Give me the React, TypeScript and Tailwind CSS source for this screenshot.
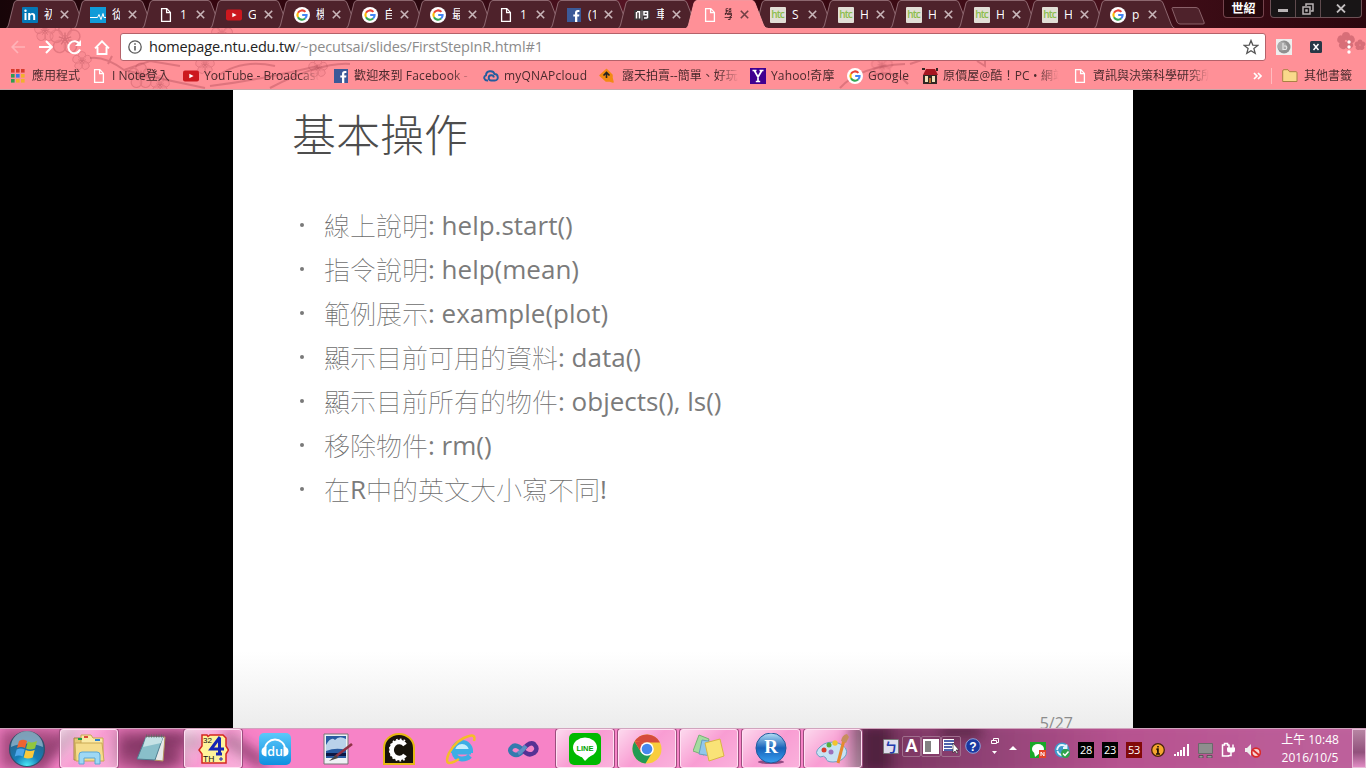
import React from "react";

const ui = "font-['Open_Sans','Noto_Sans_CJK_TC',sans-serif]";

function GoogleG({ className = "" }: { className?: string }) {
  return (
    <svg width="16" height="16" viewBox="0 0 16 16" className={`shrink-0 ${className}`}>
      <circle cx="8" cy="8" r="8" fill="#fff" />
      <g fill="none" strokeWidth="2.1">
        <path d="M11.4 4.9A4.6 4.6 0 0 0 4 5.8" stroke="#ea4335" />
        <path d="M4 5.8a4.6 4.6 0 0 0 0 4.5" stroke="#fbbc05" />
        <path d="M4 10.3a4.6 4.6 0 0 0 7.1 1.2" stroke="#34a853" />
        <path d="M11.1 11.5A4.4 4.4 0 0 0 12.6 8H8.2" stroke="#4285f4" />
      </g>
    </svg>
  );
}

function PageIcon({ className = "" }: { className?: string }) {
  return (
    <svg width="16" height="16" viewBox="0 0 16 16" fill="none" stroke="#fff" strokeWidth="1.3" className={`shrink-0 ${className}`}>
      <path d="M3.6 1.6h5.2l3.6 3.8v9H3.6zM8.6 1.8v3.8h3.6" />
    </svg>
  );
}

function YouTube({ className = "" }: { className?: string }) {
  return (
    <svg width="16" height="16" viewBox="0 0 16 16" className={`shrink-0 ${className}`}>
      <rect y="2.5" width="16" height="11" rx="2" fill="#cc181e" />
      <path d="M6.3 5.7v4.6L10.6 8z" fill="#fff" />
    </svg>
  );
}

function Facebook({ className = "" }: { className?: string }) {
  return (
    <svg width="16" height="16" viewBox="0 0 16 16" className={`shrink-0 ${className}`}>
      <rect x="1" y="1" width="14" height="14" fill="#3b5998" />
      <path d="M9 15V9.6H7.3V7.4H9V6c0-2 1-3 2.9-3h1.5v2.1h-1.1c-.8 0-1 .4-1 1.1v1.2h2.1l-.3 2.2h-1.8V15z" fill="#fff" />
    </svg>
  );
}

function Favicon({ kind }: { kind: string }) {
  switch (kind) {
    case "in":
      return (
        <svg width="16" height="16" viewBox="0 0 16 16" className="shrink-0">
          <rect width="16" height="16" rx="1" fill="#0477b5" />
          <path d="M2.5 6h2v7h-2zM6.2 6h2v1c1.3-1.8 5-1.6 5 1.8V13h-2V9.4c0-2.3-3-2.1-3 0V13h-2z" fill="#fff" />
          <circle cx="3.5" cy="3.8" r="1.2" fill="#fff" />
        </svg>
      );
    case "pulse":
      return (
        <svg width="16" height="16" viewBox="0 0 16 16" className="shrink-0">
          <rect width="16" height="16" fill="#0f9bd8" />
          <path d="M0 10.500h7.500l1.500-3 2 5 2-6 1 4h2" fill="none" stroke="#fff" strokeWidth="1" />
        </svg>
      );
    case "page":
      return <PageIcon />;
    case "yt":
      return <YouTube />;
    case "fb":
      return <Facebook />;
    case "book":
      return (
        <svg width="16" height="16" viewBox="0 0 16 16" className="shrink-0">
          <path d="M0 3h16v10H9l-1 1-1-1H0z" fill="#3a3536" />
          <path d="M2.500 11.500V5M3 4.800H5.500V11.500M13.500 11V4.800H10v3h3.500M13.500 11H10" fill="none" stroke="#fff" strokeWidth="1.500" />
          <path d="M8 3.500v10" stroke="#aaa" strokeWidth=".8" />
        </svg>
      );
    case "htc":
      return (
        <span className="flex h-4 w-4 shrink-0 items-center justify-center rounded-[1px] bg-[#e2dfd6] pr-px pb-[2px] font-['Open_Sans',sans-serif] text-[10px] leading-none font-semibold tracking-[-0.9px] text-[#8cbd4c]">
          htc
        </span>
      );
    default:
      return <GoogleG />;
  }
}

const tabs: [string, string][] = [
  ["in", "初"], ["pulse", "從"], ["page", "1"], ["yt", "G"], ["g", "機"], ["g", "自"], ["g", "最"], ["page", "1"],
  ["fb", "(1"], ["book", "車"], ["page", "學"], ["htc", "S"], ["htc", "H"], ["htc", "H"], ["htc", "H"], ["htc", "H"], ["g", "p"],
];

function Tab({ kind, label, active }: { kind: string; label: string; active: boolean }) {
  return (
    <div className={`relative h-[29px] w-[68px] shrink-0 ${active ? "z-10" : ""}`}>
      <svg width="82" height="29" viewBox="0 0 82 29" className="absolute top-0 left-0">
        <path
          d="M0 28.5Q1.500 28 2.500 25L8 3Q9 .5 11 .5H66Q68 .5 69 3L77.500 25Q79 28 81 28.5z"
          fill={active ? "#ff9097" : "#4e222b"}
          stroke={active ? "#ff9fa5" : "#957078"}
          strokeWidth=".9"
        />
        {active && <path d="M0 28.5h82" stroke="#ff9097" strokeWidth="1.5" />}
      </svg>
      <div className="relative flex h-[29px] items-center pl-4">
        <Favicon kind={kind} />
        <span className={`ml-[6px] w-[8px] overflow-hidden text-[12px] leading-4 whitespace-nowrap ${active ? "text-[#33191c]" : "text-white"}`}>{label}</span>
        <svg width="9" height="9" viewBox="0 0 9 9" className="ml-[8px] shrink-0" stroke={active ? "#713f45" : "#c9b6ba"} strokeWidth="1.6">
          <path d="M.8.8l7.4 7.4M8.2.8L.8 8.2" />
        </svg>
      </div>
    </div>
  );
}

function Blossom({ x, y, s = 1 }: { x: number; y: number; s?: number }) {
  return (
    <g transform={`translate(${x} ${y}) scale(${s})`}>
      {[0, 72, 144, 216, 288].map((a) => (
        <g key={a} transform={`rotate(${a})`}>
          <circle cx="0" cy="-7" r="4.800" fill="#e87f88" fillOpacity=".45" stroke="#c9606b" strokeWidth="1.100" />
          <path d="M0 0v-5" stroke="#b34f5a" strokeWidth="1" />
        </g>
      ))}
      <circle r="1.500" fill="#b34f5a" />
    </g>
  );
}

function ToolbarArt() {
  return (
    <svg width="1366" height="61" viewBox="0 0 1366 61" className="absolute inset-0">
      <g opacity=".5">
        <Blossom x={65} y={11} s={1.3} />
        <Blossom x={45} y={3} s={0.9} />
        <Blossom x={82} y={33} s={0.8} />
        <Blossom x={222} y={6} s={0.9} />
        <Blossom x={141} y={48} s={1.1} />
        <Blossom x={160} y={57} s={0.8} />
        <Blossom x={205} y={37} s={0.8} />
        <Blossom x={318} y={40} s={0.8} />
        <Blossom x={882} y={38} s={0.9} />
      </g>
      <g fill="#a94753" opacity=".45">
        {[0, 72, 144, 216, 288].map((a) => (
          <React.Fragment key={a}>
            <circle cx="1346" cy="8" r="4" transform={`rotate(${a} 1346 13)`} />
            <circle cx="1360" cy="14" r="2.500" transform={`rotate(${a} 1360 17)`} />
          </React.Fragment>
        ))}
      </g>
      <g fill="none" stroke="#a94753" strokeWidth="2" opacity=".38">
        <path d="M90 30Q105 28 124 42Q165 52 205 60M108 36l4-8M124 42L150 33L180 38M210 58Q260 52 318 38M270 60Q320 34 350 36M215 50q25-20 60-12M840 60Q860 38 905 36M870 48q24-8 38 8M910 36q20-7 28-7M985 32v6l-8-5" />
      </g>
    </svg>
  );
}

function Mark({ icon, text, box }: { icon: React.ReactNode; text: string; box: string }) {
  return (
    <div className="flex shrink-0 items-center">
      {icon}
      <span className={`overflow-hidden text-[12px] leading-4 whitespace-nowrap ${box}`}>{text}</span>
    </div>
  );
}

const fade = "[mask-image:linear-gradient(to_right,#000_82%,transparent)]";

function Bookmarks() {
  return (
    <div className="relative flex h-[27px] items-center text-[#4a2a2d]">
      <Mark
        icon={
          <svg width="14" height="14" viewBox="0 0 14 14" className="ml-[11px]">
            {["#d63a2c", "#d63a2c", "#d63a2c", "#2f9e4f", "#3c78e6", "#f1b02b", "#2f9e4f", "#f1b02b", "#f1b02b"].map((c, i) => (
              <rect key={i} x={(i % 3) * 5} y={Math.floor(i / 3) * 5} width="3.6" height="3.6" fill={c} />
            ))}
          </svg>
        }
        text="應用程式"
        box="ml-[7px] w-[59px]"
      />
      <Mark icon={<PageIcon />} text="I Note登入" box="ml-[5px] w-[61px]" />
      <Mark icon={<YouTube className="ml-[10px]" />} text="YouTube - Broadcast" box={`ml-[5px] w-[115px] ${fade}`} />
      <Mark icon={<Facebook className="ml-[14px]" />} text="歡迎來到 Facebook -" box={`ml-[5px] w-[119px] tracking-[0.15px] ${fade}`} />
      <Mark
        icon={
          <svg width="16" height="16" viewBox="0 0 16 16" className="ml-[10px]" fill="none" stroke="#245c9e" strokeWidth="1.9">
            <path d="M5 12.5C1 13 0 8.5 3 7.4 3 2.5 10.2 1.8 11.5 6c4 0 4.7 6.5.2 6.5H8.3a2.6 2.6 0 1 1 2.6-3" />
          </svg>
        }
        text="myQNAPcloud"
        box="ml-[5px] w-[91px] tracking-[0.2px]"
      />
      <Mark
        icon={
          <svg width="16" height="16" viewBox="0 0 16 16" className="ml-[4px]">
            <path d="M7.500 1.500l5.500 5.500v3l1 4-3-1H7l-6-5.500z" fill="#f28a13" stroke="#f28a13" strokeWidth="1.5" strokeLinejoin="round" />
            <path d="M4.500 7.500l3-3 3 3M7.500 5v5" stroke="#222" strokeWidth="1.6" fill="none" />
          </svg>
        }
        text="露天拍賣--簡單、好玩"
        box={`ml-[7px] w-[117px] ${fade}`}
      />
      <Mark
        icon={
          <svg width="16" height="16" viewBox="0 0 16 16" className="ml-[11px]">
            <rect width="16" height="16" fill="#400090" />
            <path d="M2.5 2.5h4M9.5 2.5h4M4.3 2.5L8 9l3.8-6.5M8 8.500v5M5.800 13.500h4.400" stroke="#fff" strokeWidth="1.7" fill="none" />
          </svg>
        }
        text="Yahoo!奇摩"
        box="ml-[5px] w-[68px] tracking-[0.15px]"
      />
      <Mark icon={<GoogleG className="ml-[8px]" />} text="Google" box="ml-[5px] w-[46px] tracking-[0.3px]" />
      <Mark
        icon={
          <svg width="16" height="16" viewBox="0 0 16 16" className="ml-[8px]">
            <path d="M0 0h3v2H0zM14 0h2v3h-2zM1 7h14v9H1z" fill="#322724" />
            <path d="M4 1h9l3 6H1z" fill="#a51620" />
            <path d="M3 8h3v6H3zM10 8h3v6h-3z" fill="#eee1b9" />
            <path d="M7 10h2v5H7z" fill="#bd6c2d" />
          </svg>
        }
        text="原價屋@酷！PC • 網站"
        box={`ml-[5px] w-[116px] tracking-[0.15px] ${fade}`}
      />
      <Mark icon={<PageIcon className="ml-[13px]" />} text="資訊與決策科學研究所" box={`ml-[5px] w-[116px] ${fade}`} />
      <svg width="9" height="8" viewBox="0 0 9 8" className="ml-[44px] shrink-0" fill="none" stroke="#fff" strokeWidth="1.7">
        <path d="M1 1l3 3-3 3M5 1l3 3-3 3" />
      </svg>
      <span className="ml-[9px] h-4 w-px bg-[#ffbcc0]" />
      <svg width="16" height="14" viewBox="0 0 16 14" className="ml-[10px] shrink-0">
        <path d="M.7 12.500V2Q.7.700 2 .700h4l1.500 2H14q1 0 1 1v8.800z" fill="#f9d98b" stroke="#a98044" />
      </svg>
      <span className="ml-[6px] text-[12px] whitespace-nowrap">其他書籤</span>
    </div>
  );
}

function Browser() {
  return (
    <header className={`h-[90px] ${ui}`}>
      <div className="flex h-[28px] bg-[linear-gradient(90deg,#170508,#36060f_15%,#29070e_30%,#5b1526_48%,#35070f_56%,#46101b_80%,#2b060d)] pl-[6px]">
        {tabs.map(([kind, label], i) => (
          <Tab key={i} kind={kind} label={label} active={i === 10} />
        ))}
        <svg width="35" height="18" viewBox="0 0 35 18" className="mt-[7px] ml-[9px] shrink-0">
          <path d="M1 1.500Q1 .5 2 .5H25q2 0 3 2L33 15q1 2-1 2H9q-2 0-3-2z" fill="#4e222b" stroke="#8a6169" />
        </svg>
        <div className="ml-[17px] flex h-[18px] w-[41px] shrink-0 items-center justify-center rounded-b-[4px] border border-t-0 border-[#74434c] bg-[#24070c] text-[12px] font-bold text-white">世紹</div>
        <div className="ml-[6px] flex h-[18px] w-[92px] shrink-0 rounded-b-[4px] border border-t-0 border-[#6d5156] bg-[#181516]">
          <div className="flex w-[25px] items-center justify-center border-r border-[#5f4b4e]"><span className="mt-[3px] h-[3px] w-[10px] bg-[#b9b4b5]" /></div>
          <div className="flex w-[25px] items-center justify-center border-r border-[#5f4b4e]">
            <svg width="12" height="12" viewBox="0 0 12 12" fill="none" stroke="#b9b4b5" strokeWidth="1.5"><path d="M4 3V1h7v7H9M1 4h7v7H1zM4 7h1v1H4z" /></svg>
          </div>
          <div className="flex flex-1 items-center justify-center">
            <svg width="10" height="9" viewBox="0 0 10 9" stroke="#c2bebf" strokeWidth="1.8"><path d="M1 .5l8 8M9 .5l-8 8" /></svg>
          </div>
        </div>
      </div>
      <div className="relative h-[62px] border-b border-[#c9a5a8] bg-[#ff9097]">
        <ToolbarArt />
        <div className="relative flex h-[34px] items-start pt-[5px]">
          <div className="flex h-[28px] items-center">
            <svg width="14" height="14" viewBox="0 0 14 14" className="ml-[11px]" fill="none" stroke="#ffb3b8" strokeWidth="1.7"><path d="M14 7H1.500M7 1L1.200 7 7 13" /></svg>
            <svg width="14" height="14" viewBox="0 0 14 14" className="ml-[14px]" fill="none" stroke="#fff" strokeWidth="2"><path d="M0 7h12.500M7 1l5.800 6L7 13" /></svg>
            <svg width="15" height="15" viewBox="0 0 15 15" className="ml-[14px]" fill="none" stroke="#fff" strokeWidth="2"><path d="M12.500 4A6 6 0 1 0 13 9.500" /><path d="M14 0v6H8z" fill="#fff" stroke="none" /></svg>
            <svg width="16" height="15" viewBox="0 0 16 15" className="ml-[12px]" fill="none" stroke="#fff" strokeWidth="1.900"><path d="M3.500 7v7h9V7M1 8.300l7-7 7 7" /></svg>
          </div>
          <div className="ml-[10px] flex h-[28px] w-[1146px] items-center rounded-[3px] border border-[#b5626a] bg-white pr-[6px] pl-[7px]">
            <svg width="14" height="14" viewBox="0 0 14 14" fill="none" stroke="#5a5a5a" strokeWidth="1.3"><circle cx="7" cy="7" r="6.200" /><path d="M7 6v4.500M7 3.300v1.500" strokeWidth="1.600" /></svg>
            <span className="ml-[7px] text-[14.5px] leading-5 tracking-[-0.14px] whitespace-nowrap text-[#8b8b8b]"><span className="text-[#222]">homepage.ntu.edu.tw</span>/~pecutsai/slides/FirstStepInR.html#1</span>
            <svg width="16" height="16" viewBox="0 0 16 16" className="ml-auto" fill="none" stroke="#555" strokeWidth="1.300"><path d="M8 1.500l1.800 4.600 5 .3-3.900 3.200 1.300 4.800L8 11.700l-4.200 2.700 1.300-4.800-3.900-3.200 5-.3z" /></svg>
          </div>
          <div className="flex h-[28px] items-center">
            <svg width="16" height="16" viewBox="0 0 16 16" className="ml-[10px]"><path d="M0 0h16v16H0z" fill="#eee" /><circle cx="8" cy="8" r="6.500" fill="#8f8f8f" /><circle cx="6" cy="7" r="4.500" fill="#aaa" /><path d="M7 4v6.500h3q1.500-2 0-3.500H8" stroke="#e5e5e5" fill="none" strokeWidth="1.200" /></svg>
            <svg width="12" height="12" viewBox="0 0 12 12" className="ml-[18px]"><rect width="12" height="12" rx="1.500" fill="#263746" /><path d="M3.500 3l5 6M8.500 3l-5 6" stroke="#fff" strokeWidth="1.500" /></svg>
            <svg width="4" height="14" viewBox="0 0 4 14" className="ml-[25px]" fill="#fff"><circle cx="2" cy="2" r="1.700" /><circle cx="2" cy="7" r="1.700" /><circle cx="2" cy="12" r="1.700" /></svg>
          </div>
        </div>
        <Bookmarks />
      </div>
    </header>
  );
}

const items: [string, string][] = [
  ["線上說明", ": help.start()"],
  ["指令說明", ": help(mean)"],
  ["範例展示", ": example(plot)"],
  ["顯示目前可用的資料", ": data()"],
  ["顯示目前所有的物件", ": objects(), ls()"],
  ["移除物件", ": rm()"],
];

function Bullet() {
  return <span className="mr-[20px] ml-[7px] h-[4px] w-[4px] rounded-full bg-[#797979]" />;
}

function Slide() {
  return (
    <main className="flex h-[638px] justify-center overflow-hidden bg-black">
      <section className={`flex h-[638px] w-[900px] flex-col bg-[linear-gradient(#fff_88%,#ececec)] ${ui}`}>
        <h1 className="mt-[15px] ml-[59px] h-[60px] text-[44px] leading-[60px] font-light text-[#4d4d4d]">基本操作</h1>
        <ul className="mt-[38px] ml-[60px] text-[26px] leading-[42px] text-[#7b7b7b]">
          {items.map(([zh, en]) => (
            <li key={zh} className="flex h-[44px] items-center whitespace-nowrap">
              <Bullet />
              <span className="pt-[2px] font-thin text-[#6c6c6c]">{zh}</span><span className="pb-[1px] whitespace-pre">{en}</span>
            </li>
          ))}
          <li className="flex h-[44px] items-center whitespace-nowrap">
            <Bullet />
            <span className="pt-[2px] font-thin text-[#6c6c6c]">在</span><span>R</span><span className="pt-[2px] font-thin text-[#6c6c6c]">中的英文大小寫不同</span><span>!</span>
          </li>
        </ul>
        <div className="mt-auto h-[16px] overflow-hidden pr-[60px] text-right text-[16px] leading-[22px] text-[#8c8c8c]">5/27</div>
      </section>
    </main>
  );
}

function Task({ children, on }: { children: React.ReactNode; on?: boolean }) {
  return (
    <div className={`flex h-[39px] w-[58px] shrink-0 items-center justify-center rounded-[3px] ${on ? "border border-[#ffe0f2] bg-[linear-gradient(135deg,#ffffffb0,#ffffff35_50%,#ffffff60)] shadow-[0_0_0_1px_#9b4d7d]" : ""}`}>
      {children}
    </div>
  );
}

function Orb() {
  return (
    <svg width="38" height="38" viewBox="0 0 38 38" className="ml-[8px] shrink-0">
      <defs>
        <radialGradient id="orb" cx=".5" cy="1" r=".9"><stop offset="0" stopColor="#4ef2fb" /><stop offset=".4" stopColor="#167eb8" /><stop offset="1" stopColor="#2c5e83" /></radialGradient>
      </defs>
      <circle cx="19" cy="19" r="17.500" fill="url(#orb)" stroke="#35506b" strokeWidth="1.200" />
      <path d="M3 17a16 16 0 0 1 32 0Q18 10 3 17z" fill="#cde1ee" opacity=".5" />
      <path d="M11 11q4-2.500 8 0l-2 7q-4-2-8 0z" fill="#ee6432" />
      <path d="M20 11.500q4 2 9-.5l-2 7.500q-5 2-9 0z" fill="#91c63e" />
      <path d="M8.700 19.500q4-2 8 0l-2 7q-4-2-8 0z" fill="#4da6e9" />
      <path d="M17.700 20q4 2 9 0l-2 7.500q-5 2-9 0z" fill="#fbc93b" />
    </svg>
  );
}

function Taskbar() {
  return (
    <footer className={`relative flex h-[40px] items-center overflow-hidden border-t border-[#d1a4be] bg-[#f783c7] ${ui}`}>
      <svg width="1366" height="40" viewBox="0 0 1366 40" className="absolute inset-0">
        <defs>
          <filter id="soft" x="-20%" y="-50%" width="140%" height="200%"><feGaussianBlur stdDeviation="7" /></filter>
          <linearGradient id="tray" x1="0" x2="1"><stop offset="0" stopColor="#713058" /><stop offset=".25" stopColor="#904275" /><stop offset=".5" stopColor="#b6528f" /><stop offset="1" stopColor="#be639d" /></linearGradient>
        </defs>
        <g filter="url(#soft)">
          <path d="M0 0h60l-20 40H0zM115 0h70v40h-70z" fill="#a4487e" />
          <path d="M35 42L75-2M120 20l45-10M140 40q25-45 60-25M225 8l40 28M155 40l20-16" stroke="#702956" strokeWidth="9" fill="none" />
          <path d="M850-10h540v60H850z" fill="url(#tray)" />
          <path d="M860-5h32v50h-32zM940-5h42v14h-42z" fill="#51223f" />
        </g>
      </svg>
      <div className="relative flex h-[39px] items-center">
        <Orb />
        <div className="ml-[14px] flex gap-[4px]">
          <Task on>
            <svg width="34" height="32" viewBox="0 0 34 32"><path d="M2 5h9l2 3h16v19H2z" fill="#e5c873" stroke="#a58644" /><path d="M9 2h10l2 3h10v20H9z" fill="#faeaa6" stroke="#c7a653" /><path d="M3 10h27l2 18H4z" fill="#f5dc8c" stroke="#caa954" /><path d="M6 6h4" stroke="#17a14b" strokeWidth="2" /><path d="M12 4h4" stroke="#db4b39" strokeWidth="2" /><path d="M23 7h5" stroke="#2e82d0" strokeWidth="2" /><path d="M7 31v-9q0-3 3-3h15q3 0 3 3v9h-5v-6H12v6z" fill="#9ed8f4" stroke="#5ba7d4" /></svg>
          </Task>
          <Task>
            <svg width="34" height="32" viewBox="0 0 34 32"><path d="M12 4h19l-2 24-9-1z" fill="#e8e8e8" stroke="#b4925c" /><path d="M12 4h17l-8 23-18-1z" fill="#89bfca" stroke="#507f90" /><path d="M12 4h17l-2 6-18 4z" fill="#c5e2e5" /><path d="M12 3h18" stroke="#666" strokeWidth="3" strokeDasharray="1 1.500" /></svg>
          </Task>
          <Task on>
            <svg width="32" height="32" viewBox="0 0 32 32">
              <path d="M5 2h5l1 1.500L13 2h13l3 3v8l2.500 4-2.500 4v9H5v-9l-3-4 3-4z" fill="#fff39b" stroke="#d42722" strokeWidth="1.500" />
              <text x="6" y="10" fontSize="8" fontFamily="Liberation Sans" fill="#111">32</text>
              <path d="M23 4l-9 12h13M22.500 5v16M19 21h6" stroke="#1726b4" strokeWidth="3" fill="none" />
              <text x="6" y="29" fontSize="8.500" fontFamily="Liberation Sans" fill="#111">TH</text>
              <path d="M22 26h4M24 24v4" stroke="#1726b4" />
            </svg>
          </Task>
          <Task>
            <svg width="32" height="32" viewBox="0 0 32 32"><defs><linearGradient id="du" x2="0" y2="1"><stop stopColor="#5cc9fa" /><stop offset="1" stopColor="#0f8fe0" /></linearGradient></defs><rect width="32" height="32" rx="5" fill="url(#du)" /><path d="M6 16a10 9.500 0 0 1 20 0" fill="none" stroke="#fff" strokeWidth="1.800" /><path d="M7.500 13.500v10q-5-.5-5-5t5-5zM24.500 13.500v10q5-.5 5-5t-5-5z" fill="#fff" /><text x="16" y="22.500" fontSize="12.500" textAnchor="middle" fontFamily="Open Sans" fontWeight="600" fill="#fff">du</text></svg>
          </Task>
          <Task>
            <svg width="32" height="32" viewBox="0 0 32 32"><path d="M3 1h24v30H3z" fill="#eef1f5" stroke="#777" /><path d="M5 3h20v22H5z" fill="#285ba1" /><path d="M5 12q5-9 9-5 4-5 11-1v11q-10-3-20 1z" fill="#b9d2ea" /><path d="M5 21.500h20" stroke="#0b1745" strokeWidth="3" /><path d="M31 11L14 24" stroke="#8e3144" strokeWidth="2.600" /><path d="M15 22l-7 6 9-3z" fill="#444" /></svg>
          </Task>
          <Task>
            <svg width="32" height="32" viewBox="0 0 32 32"><path d="M1 31V15a15 14 0 0 1 30 0v16z" fill="#17130a" stroke="#e5b813" strokeWidth="2" /><path d="M22 12A7.500 8 0 1 0 22 22" fill="none" stroke="#fff" strokeWidth="4.500" /><path d="M22 8A10 10.500 0 1 0 22 26" fill="none" stroke="#fff" strokeWidth="2" strokeDasharray="1.700 2" /></svg>
          </Task>
          <Task>
            <svg width="32" height="32" viewBox="0 0 32 32"><path d="M26 19H9q1 7 8 7 5 0 8-3" fill="none" stroke="#3caee5" strokeWidth="5" /><path d="M8 18a9 9 0 0 1 18 0z" fill="#c5effc" stroke="#3caee5" strokeWidth="4" /><path d="M29 8Q31 1 24 3 12 6 4 20 0 29 4 30q4 0 10-4" fill="none" stroke="#f4bd28" strokeWidth="2.500" /></svg>
          </Task>
          <Task>
            <svg width="32" height="20" viewBox="0 0 32 20" fill="none" strokeWidth="4.500"><path d="M17 12Q9 4 5 8t1 7q5 3 11-4" stroke="#347bae" /><path d="M15 12q7-10 12-7 5 5 0 9-6 4-12-4" stroke="#563294" /><path d="M11 14.500q4-2 8-7.500" stroke="#5c8fc4" strokeWidth="4" /></svg>
          </Task>
          <Task on>
            <svg width="32" height="32" viewBox="0 0 32 32"><rect width="32" height="32" rx="5" fill="#00b900" /><ellipse cx="16" cy="14.500" rx="12" ry="10" fill="#fff" /><path d="M12 23l4 5 7-7z" fill="#fff" /><text x="16" y="17.500" textAnchor="middle" fontSize="7.500" fontWeight="bold" fontFamily="Liberation Sans" fill="#00a600">LINE</text></svg>
          </Task>
          <Task on>
            <svg width="30" height="30" viewBox="0 0 30 30"><circle cx="15" cy="15" r="14.500" fill="#f8cd3d" /><path d="M2.500 7.500A14.500 14.500 0 0 1 28 8.500H15z" fill="#d64b3c" /><path d="M2.500 7.500A14.500 14.500 0 0 0 13.500 29.400l7-11.400L9 18z" fill="#229b54" /><path d="M2.500 7.500L9 18l6-9.500z" fill="#d64b3c" /><circle cx="15" cy="15" r="6.800" fill="#fff" /><circle cx="15" cy="15" r="5.300" fill="#4688ed" /></svg>
          </Task>
          <Task on>
            <svg width="32" height="30" viewBox="0 0 32 30"><path d="M6 1l10 4-5 16-11-4z" fill="#a5dba0" stroke="#78b275" /><path d="M9 6l12 2-3 14-12-2z" fill="#91c7eb" stroke="#689ebd" /><path d="M12 9l15-4 4 17-15 5z" fill="#f9e377" stroke="#d8b644" /></svg>
          </Task>
          <Task on>
            <svg width="32" height="32" viewBox="0 0 32 32"><defs><linearGradient id="rball" x2="0" y2="1"><stop stopColor="#b8e1f7" /><stop offset=".5" stopColor="#1762b9" /><stop offset="1" stopColor="#389ff0" /></linearGradient></defs><ellipse cx="16" cy="29" rx="13" ry="2" fill="#914c83" /><circle cx="16" cy="15" r="15" fill="url(#rball)" stroke="#215a9b" /><text x="16" y="20" fontSize="19" textAnchor="middle" fontFamily="Liberation Serif" fontWeight="bold" fill="#fff">R</text></svg>
          </Task>
          <Task on>
            <svg width="34" height="32" viewBox="0 0 34 32"><path d="M4 14Q11 7 22 10q11 4 8 12-4 7-13 7-7 0-7-4-2-3-6-1-7-4 0-10z" fill="#c7e2f3" stroke="#6c9fc4" /><circle cx="8" cy="17" r="2.500" fill="#d93d2c" /><circle cx="13" cy="12" r="2.500" fill="#58ad39" /><circle cx="19" cy="10" r="2.700" fill="#f2c42f" /><circle cx="15" cy="19" r="2.500" fill="#9a71bd" /><path d="M28 7l-6 23" stroke="#e58a2e" strokeWidth="3" /><path d="M25 8q1-6 6-7l2 3-3 6z" fill="#c88e5d" /></svg>
          </Task>
        </div>
      </div>
      <Tray />
    </footer>
  );
}

function Num({ n, className }: { n: string; className: string }) {
  return <span className={`mt-[2px] flex h-[16px] w-[16px] shrink-0 items-center justify-center text-[11px] leading-none tracking-[-0.4px] text-white ${className}`}>{n}</span>;
}

function Tray() {
  return (
    <div className="relative flex h-[39px] flex-1 items-center">
      <span className="mb-[5px] ml-[21px] flex h-[15px] w-[16px] shrink-0 items-center justify-center rounded-[1px] border border-[#777] bg-[#dedeed] font-['Noto_Sans_CJK_TC',sans-serif] text-[13px] leading-none font-bold text-[#233bad]">ㄅ</span>
      <div className="mb-[5px] ml-[3px] flex h-[21px] shrink-0 items-center">
        <span className="flex h-[21px] w-[19px] items-center justify-center rounded-[2px] border border-[#a06e8d] font-['Liberation_Sans',sans-serif] text-[18px] font-bold text-white">A</span>
        <span className="flex h-[21px] w-[20px] items-center justify-center rounded-[2px] border border-[#a06e8d]"><span className="h-[15px] w-[16px] border-2 border-white bg-[linear-gradient(90deg,#828282_50%,#fff_50%)]" /></span>
        <span className="flex h-[21px] w-[20px] items-center justify-center rounded-[2px] border border-[#a06e8d]"><svg width="16" height="16" viewBox="0 0 16 16"><path d="M0 1h11v12H0z" fill="#fff" /><path d="M1 3h10M1 6h10M1 9h8M1 12h9" stroke="#173090" strokeWidth="1.500" /><path d="M10 5v10l2-2 2 3 1-1-2-3h3z" fill="#fff" stroke="#222" strokeWidth=".6" /></svg></span>
      </div>
      <svg width="16" height="16" viewBox="0 0 16 16" className="mb-[6px] ml-[4px] shrink-0"><circle cx="8" cy="8" r="7.300" fill="#1a38a0" stroke="#8fa0d8" /><text x="8" y="12.500" fontSize="12" fontWeight="bold" textAnchor="middle" fontFamily="Liberation Sans" fill="#fff">?</text></svg>
      <svg width="9" height="18" viewBox="0 0 9 18" className="mb-[6px] ml-[9px] shrink-0" fill="none" stroke="#fff"><path d="M3.500 3V1.500h5v4H6.500M1.500 3.500h5v3h-5z" /><path d="M2 14h5l-2.500 3z" fill="#fff" stroke="none" /></svg>
      <svg width="8" height="5" viewBox="0 0 8 5" className="ml-[10px] shrink-0"><path d="M4 0l4 4H0z" fill="#fff" /></svg>
      <svg width="16" height="16" viewBox="0 0 16 16" className="mt-[2px] ml-[13px] shrink-0"><path d="M0 0h16v16H0z" fill="#19a829" /><ellipse cx="8" cy="7" rx="6" ry="5" fill="#fff" /><path d="M4 10l1 5 5-4z" fill="#fff" /><path d="M9 8h7v8H9z" fill="#e44329" /><path d="M11 14v-4l3 4v-4" stroke="#fff" fill="none" /></svg>
      <svg width="16" height="16" viewBox="0 0 16 16" className="mt-[2px] ml-[8px] shrink-0"><circle cx="8" cy="8" r="7.500" fill="#3b9acb" /><path d="M3 8q1-5 5-5 3 0 4 2.500M12.500 2.500V6H9M3.500 9q1 4 5 4" fill="none" stroke="#e4f5ff" strokeWidth="1.800" /><circle cx="11.500" cy="11.500" r="4.500" fill="#2fa34a" /><path d="M9 11.500l2 2 3.500-4" stroke="#fff" fill="none" strokeWidth="1.500" /></svg>
      <Num n="28" className="ml-[8px] bg-black" />
      <Num n="23" className="ml-[8px] bg-black" />
      <Num n="53" className="ml-[8px] bg-[#810909]" />
      <svg width="14" height="14" viewBox="0 0 14 14" className="mt-[2px] ml-[9px] shrink-0"><circle cx="7" cy="7" r="6.300" fill="#f4a62e" stroke="#492309" strokeWidth="1.300" /><path d="M7 3v1.500M5.500 6H7v5M5 11h4" stroke="#211107" strokeWidth="1.600" /></svg>
      <svg width="16" height="12" viewBox="0 0 16 12" className="mt-[3px] ml-[9px] shrink-0" fill="#fff"><path d="M0 10h2v2H0zM3 8h2v4H3zM6 6h2v6H6zM9 3h2v9H9zM13 0h2v12h-2z" /></svg>
      <svg width="15" height="15" viewBox="0 0 15 15" className="mt-[3px] ml-[8px] shrink-0"><path d="M.5.500h14v10H.500z" fill="#8e8e8e" stroke="#6a6a6a" /><path d="M1 12.500h4v2.500H1zM9 12.500h5v2.500H9z" fill="#999" stroke="#444" strokeWidth=".7" /></svg>
      <svg width="15" height="16" viewBox="0 0 15 16" className="mt-[2px] ml-[8px] shrink-0" fill="none" stroke="#fff">
        <path d="M8 3H6.500V1.500h-3V3H1.500v11h6V13" strokeWidth="1.500" />
        <path d="M6 5.500h8V8q0 2.500-2.500 2.500h-3Q6 10.500 6 8z" fill="#fff" stroke="none" />
        <path d="M8 6V2.500M12 6V2.500M10 10v3.500H8" strokeWidth="1.500" />
      </svg>
      <svg width="16" height="15" viewBox="0 0 16 15" className="mt-[3px] ml-[9px] shrink-0"><path d="M0 5h2l4-4v12L2 9H0z" fill="#eee" /><circle cx="11" cy="9.500" r="4.300" fill="#f6d5d5" stroke="#d92b2b" strokeWidth="1.700" /><path d="M8 7l6 5" stroke="#d92b2b" strokeWidth="1.700" /></svg>
      <div className="ml-auto w-[64px] shrink-0 text-center text-[12px] leading-[18px] whitespace-nowrap text-white"><div>上午 10:48</div><div>2016/10/5</div></div>
      <div className="ml-[10px] h-[39px] w-[14px] shrink-0 border border-[#e8bdd8] bg-[linear-gradient(#b785a3,#91517c_60%,#e08bc3)]" />
    </div>
  );
}

export default function App() {
  return (
    <div className="h-[768px] w-[1366px] overflow-hidden bg-black">
      <Browser />
      <Slide />
      <Taskbar />
    </div>
  );
}
